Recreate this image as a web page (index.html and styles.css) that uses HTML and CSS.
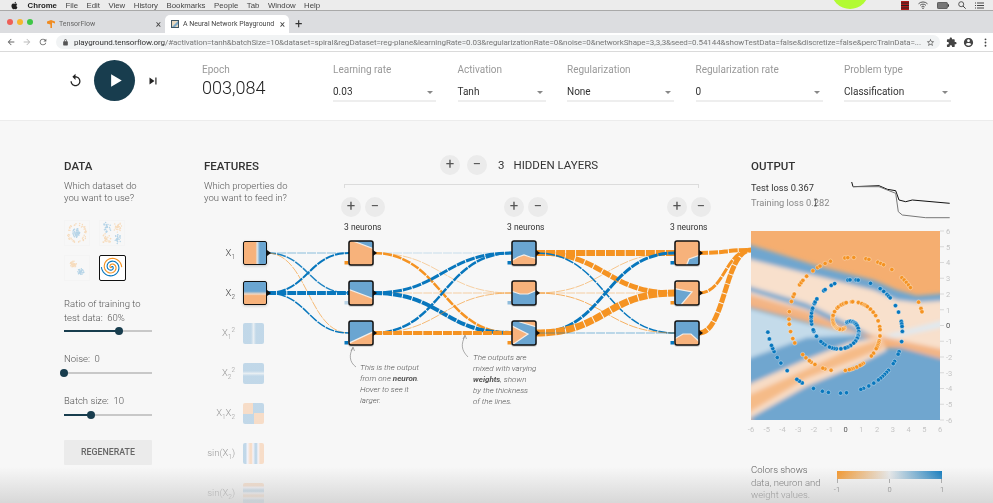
FILE: index.html
```html
<!DOCTYPE html>
<html>
  <head>
    <title>A Neural Network Playground</title>
    <link rel="stylesheet" href="styles.css">
  </head>
  <body>
    <div class="page">
      <div class="menubar">
        <svg class="apple" viewBox="0 0 24 24"><path d="M18.71 19.5c-.83 1.24-1.71 2.45-3.05 2.47-1.34.03-1.77-.79-3.29-.79-1.53 0-2 .77-3.27.82-1.31.05-2.3-1.32-3.14-2.53C4.25 17 2.94 12.45 4.7 9.39c.87-1.52 2.43-2.48 4.12-2.51 1.28-.02 2.5.87 3.29.87.78 0 2.23-1.07 3.75-.91.64.03 2.43.26 3.58 1.98-.09.06-2.14 1.25-2.12 3.74.03 2.98 2.61 3.97 2.64 3.98-.03.07-.42 1.44-1.38 2.83M13 3.5c.73-.83 1.94-1.46 2.94-1.5.13 1.17-.34 2.35-1.04 3.19-.69.85-1.83 1.51-2.95 1.42-.15-1.15.41-2.35 1.05-3.11z"/></svg>
        <b>Chrome</b>
        <span>File</span><span>Edit</span><span>View</span><span>History</span><span>Bookmarks</span><span>People</span><span>Tab</span><span>Window</span><span>Help</span>
        <div class="status-icons">
          <svg width="8" height="9" viewBox="0 0 8 9"><rect width="8" height="9" fill="#b01818"/><path d="M0 2h8M0 4.5h8M0 7h8" stroke="#222" stroke-width="1"/></svg>
          <svg width="10" height="8" viewBox="0 0 10 8"><path d="M.5 2.8a6.4 6.4 0 0 1 9 0M2 4.4a4.2 4.2 0 0 1 6 0M3.4 5.9a2.2 2.2 0 0 1 3.2 0" fill="none" stroke="#333" stroke-width=".8"/><circle cx="5" cy="7.2" r=".7" fill="#333"/></svg>
          <svg width="12" height="7" viewBox="0 0 12 7"><rect x=".4" y=".4" width="10" height="6.2" rx="1" fill="#777" stroke="#333" stroke-width=".7"/><rect x="11" y="2.3" width="1" height="2.4" fill="#333"/></svg>
          <svg width="8" height="8" viewBox="0 0 8 8"><circle cx="3.2" cy="3.2" r="2.5" fill="none" stroke="#333" stroke-width=".8"/><path d="M5 5l2.7 2.7" stroke="#333" stroke-width=".9"/></svg>
          <svg width="9" height="7" viewBox="0 0 9 7"><path d="M2 1h7M2 3.5h7M2 6h7M0 1h1M0 3.500h1M0 6h1" stroke="#333" stroke-width=".9"/></svg>
        </div>
      </div>
      <div class="green-dot"></div>

      <div class="tabstrip">
        <div class="lights"><i class="red"></i><i class="amber"></i><i class="green"></i></div>
        <div class="tab">
          <svg class="favicon" viewBox="0 0 8 8"><path d="M0 1.500L4 0l4 1.500v2L5 2.400V8H3.400V4.600L0 3.500z" fill="#f08c22"/></svg>
          <span class="tab-title">TensorFlow</span>
          <span class="tab-x">×</span>
        </div>
        <div class="tab active">
          <svg class="favicon" viewBox="0 0 8 8"><rect width="8" height="8" fill="#3d5563"/><rect x="1" y="1" width="6" height="6" fill="#e9d9c0"/><path d="M1 7l6-6v3L4 7z" fill="#7aa7c7"/></svg>
          <span class="tab-title">A Neural Network Playground</span>
          <span class="tab-x">×</span>
        </div>
        <span class="new-tab">+</span>
      </div>

      <div class="toolbar">
        <svg class="tool" viewBox="0 0 24 24"><path d="M20 11H7.830l5.590-5.590L12 4l-8 8 8 8 1.410-1.410L7.830 13H20v-2z"/></svg>
        <svg class="tool off" viewBox="0 0 24 24"><path d="M12 4l-1.410 1.410L16.170 11H4v2h12.170l-5.580 5.590L12 20l8-8z"/></svg>
        <svg class="tool" viewBox="0 0 24 24"><path d="M17.65 6.35C16.2 4.9 14.21 4 12 4c-4.42 0-7.99 3.58-7.99 8s3.57 8 7.99 8c3.73 0 6.84-2.55 7.73-6h-2.08c-.82 2.33-3.04 4-5.65 4-3.31 0-6-2.69-6-6s2.69-6 6-6c1.66 0 3.14.69 4.22 1.78L13 11h7V4l-2.35 2.35z"/></svg>
        <div class="omnibox">
          <svg class="lock" viewBox="0 0 24 24"><path d="M18 8h-1V6c0-2.76-2.24-5-5-5S7 3.24 7 6v2H6c-1.1 0-2 .9-2 2v10c0 1.1.9 2 2 2h12c1.1 0 2-.9 2-2V10c0-1.1-.9-2-2-2zM9 6c0-1.66 1.34-3 3-3s3 1.34 3 3v2H9V6z"/></svg>
          <span class="url"><b>playground.tensorflow.org</b>/#activation=tanh&amp;batchSize=10&amp;dataset=spiral&amp;regDataset=reg-plane&amp;learningRate=0.03&amp;regularizationRate=0&amp;noise=0&amp;networkShape=3,3,3&amp;seed=0.54144&amp;showTestData=false&amp;discretize=false&amp;percTrainData=...</span>
          <svg class="star" viewBox="0 0 24 24"><path d="M22 9.24l-7.19-.62L12 2 9.19 8.63 2 9.24l5.46 4.73L5.82 21 12 17.27 18.18 21l-1.63-7.03L22 9.24zM12 15.4l-3.76 2.27 1-4.28-3.32-2.88 4.38-.38L12 6.1l1.71 4.04 4.38.38-3.32 2.88 1 4.28L12 15.4z"/></svg>
        </div>
        <svg class="tool dark" viewBox="0 0 24 24"><path d="M20.5 11H19V7c0-1.1-.9-2-2-2h-4V3.5C13 2.12 11.88 1 10.5 1S8 2.12 8 3.5V5H4c-1.1 0-1.99.9-1.99 2v3.8H3.5c1.49 0 2.7 1.21 2.7 2.7s-1.21 2.7-2.7 2.7H2V20c0 1.1.9 2 2 2h3.8v-1.5c0-1.49 1.21-2.7 2.7-2.7 1.49 0 2.7 1.21 2.7 2.7V22H17c1.1 0 2-.9 2-2v-4h1.5c1.38 0 2.5-1.12 2.5-2.5S21.88 11 20.5 11z"/></svg>
        <svg class="tool dark" viewBox="0 0 24 24"><path d="M12 2C6.48 2 2 6.48 2 12s4.48 10 10 10 10-4.48 10-10S17.52 2 12 2zm0 3c1.66 0 3 1.34 3 3s-1.34 3-3 3-3-1.34-3-3 1.34-3 3-3zm0 14.2c-2.5 0-4.71-1.28-6-3.22.03-1.99 4-3.08 6-3.08 1.99 0 5.97 1.09 6 3.08-1.29 1.94-3.5 3.22-6 3.22z"/></svg>
        <svg class="tool dark" viewBox="0 0 24 24"><circle cx="12" cy="5" r="2"/><circle cx="12" cy="12" r="2"/><circle cx="12" cy="19" r="2"/></svg>
      </div>

      <div class="controls">
        <div class="player">
          <svg class="reset" viewBox="0 0 24 24"><path d="M12 5V1L7 6l5 5V7c3.31 0 6 2.69 6 6s-2.69 6-6 6-6-2.69-6-6H4c0 4.42 3.58 8 8 8s8-3.58 8-8-3.58-8-8-8z"/></svg>
          <div class="play"><svg viewBox="0 0 24 24"><path d="M5 2l17 10L5 22z"/></svg></div>
          <svg class="step" viewBox="0 0 24 24"><path d="M6 18l8.5-6L6 6v12zM16 6v12h2V6h-2z"/></svg>
        </div>
        <div class="epoch">
          <div class="ctl-label">Epoch</div>
          <div class="epoch-value">003,084</div>
        </div>
        <div class="selects">
          <div class="select w-103"><div class="ctl-label">Learning rate</div><div class="select-value">0.03</div></div>
          <div class="select w-88"><div class="ctl-label">Activation</div><div class="select-value">Tanh</div></div>
          <div class="select w-107"><div class="ctl-label">Regularization</div><div class="select-value">None</div></div>
          <div class="select w-127"><div class="ctl-label">Regularization rate</div><div class="select-value">0</div></div>
          <div class="select w-107"><div class="ctl-label">Problem type</div><div class="select-value">Classification</div></div>
        </div>
      </div>

      <div class="main">
        <svg id="network" class="network-lines" viewBox="0 121 993 382"></svg>

        <div class="col">
          <h2>DATA</h2>
          <p class="sub">Which dataset do<br>you want to use?</p>
          <div class="thumbs">
            <svg id="thumb-circle" class="thumb" viewBox="0 0 26 26"></svg>
            <svg id="thumb-xor" class="thumb" viewBox="0 0 26 26"></svg>
            <svg id="thumb-gauss" class="thumb" viewBox="0 0 26 26"></svg>
            <svg id="thumb-spiral" class="thumb selected" viewBox="0 0 26 26"></svg>
          </div>
          <p class="slider-label first">Ratio of training to<br>test data:&nbsp; 60%</p>
          <div class="slider tight"><div class="slider-fill" style="width: 62%"></div></div>
          <p class="slider-label">Noise:&nbsp; 0</p>
          <div class="slider"><div class="slider-fill" style="width: 0%"></div></div>
          <p class="slider-label">Batch size:&nbsp; 10</p>
          <div class="slider"><div class="slider-fill" style="width: 31%"></div></div>
          <div class="regen">REGENERATE</div>
        </div>

        <div class="col">
          <h2>FEATURES</h2>
          <p class="sub">Which properties do<br>you want to feed in?</p>
          <div class="features">
            <div class="feature on"><span class="feature-name">X<sub>1</sub></span><div class="box f-x1"></div></div>
            <div class="feature on"><span class="feature-name">X<sub>2</sub></span><div class="box f-x2"></div></div>
            <div class="feature"><span class="feature-name">X<sub>1</sub><sup>2</sup></span><div class="box f-x1sq"></div></div>
            <div class="feature"><span class="feature-name">X<sub>2</sub><sup>2</sup></span><div class="box f-x2sq"></div></div>
            <div class="feature"><span class="feature-name">X<sub>1</sub>X<sub>2</sub></span><div class="box f-x1x2"></div></div>
            <div class="feature"><span class="feature-name">sin(X<sub>1</sub>)</span><div class="box f-sinx1"></div></div>
            <div class="feature"><span class="feature-name">sin(X<sub>2</sub>)</span><div class="box f-sinx2"></div></div>
          </div>
        </div>

        <div class="col hidden-col">
          <div class="layers-head">
            <span class="round">+</span><span class="round">−</span>
            <span class="layers-count">3</span><span class="layers-title">HIDDEN LAYERS</span>
          </div>
          <div class="bracket"></div>
          <div class="layer-groups">
            <div class="layer-group"><span class="round">+</span><span class="round">−</span><div class="neurons">3 neurons</div></div>
            <div class="layer-group"><span class="round">+</span><span class="round">−</span><div class="neurons">3 neurons</div></div>
            <div class="layer-group"><span class="round">+</span><span class="round">−</span><div class="neurons">3 neurons</div></div>
          </div>
          <div class="note note-neuron">This is the output<br>from one <b>neuron</b>.<br>Hover to see it<br>larger.</div>
          <div class="note note-weights">The outputs are<br>mixed with varying<br><b>weights</b>, shown<br>by the thickness<br>of the lines.</div>
        </div>

        <div class="col">
          <h2>OUTPUT</h2>
          <div class="loss-row">
            <div class="loss">
              <div class="loss-test">Test loss 0.367</div>
              <div class="loss-train">Training loss 0.282</div>
            </div>
            <svg class="loss-chart" viewBox="852 180 100 38">
              <polyline points="852.7,182 854,186.7 880,185.7 888.3,189.3 896.7,190.7 900,200 906.7,201.7 913.3,200 950.7,203.3" fill="none" stroke="#111" stroke-width="1"/>
              <polyline points="854,186.7 880,186.7 890,190.7 896.7,193.3 899.3,211.7 903.3,215 926.7,217.7 950.7,217.7" fill="none" stroke="#777" stroke-width="1"/>
            </svg>
          </div>
          <svg id="plot" class="plot" width="210" height="205" viewBox="0 0 210 205"></svg>
          <div class="legend">
            <p class="legend-text">Colors shows<br>data, neuron and<br>weight values.</p>
            <svg class="legend-scale" width="110" height="30" viewBox="0 0 110 30">
              <defs>
                <linearGradient id="scale-grad">
                  <stop offset="0" stop-color="#f59322"/>
                  <stop offset=".5" stop-color="#e8eaeb"/>
                  <stop offset="1" stop-color="#0877bd"/>
                </linearGradient>
              </defs>
              <rect x="0" y="0" width="105" height="8" fill="url(#scale-grad)"/>
              <path d="M.5 8v4M52.5 8v4M104.5 8v4" stroke="#777" stroke-width=".7"/>
              <text x="0" y="21" text-anchor="middle">-1</text>
              <text x="52.5" y="21" text-anchor="middle">0</text>
              <text x="105" y="21" text-anchor="middle">1</text>
            </svg>
          </div>
        </div>

        <div class="bottom-fade"></div>
      </div>
    </div>
    <script src="app.js"></script>
  </body>
</html>
```

FILE: styles.css
```css
* {
  box-sizing: border-box;
}

body {
  margin: 0;
  background-color: #f7f7f7;
  overflow: hidden;
}

.page {
  position: relative;
  width: 993px;
  height: 503px;
  overflow: hidden;
  font-family: Roboto, "Liberation Sans", sans-serif;
  color: #333;
  filter: blur(0.45px);
}

/* mac menu bar */
.menubar {
  display: flex;
  align-items: center;
  gap: 8.5px;
  height: 11px;
  padding-left: 10px;
  background-color: #ececec;
  border-bottom: 1px solid #a9a9a9;
  font-family: "Liberation Sans", sans-serif;
  font-size: 7.8px;
  color: #444;
}

.menubar b {
  color: #222;
}

.apple {
  width: 9px;
  height: 9px;
  fill: #222;
}

.status-icons {
  display: flex;
  align-items: center;
  gap: 9px;
  margin-left: auto;
  padding-right: 9px;
}

.green-dot {
  position: absolute;
  left: 831px;
  top: -29px;
  width: 38px;
  height: 38px;
  border-radius: 50%;
  background-color: #b2fb33;
}

/* tabs */
.tabstrip {
  display: flex;
  align-items: flex-end;
  height: 22px;
  padding-left: 7px;
  background-color: #dcdde0;
}

.lights {
  display: flex;
  gap: 4px;
  align-self: center;
  width: 34px;
}

.lights i {
  width: 6px;
  height: 6px;
  border-radius: 50%;
}

.lights .red { background-color: #ee5f57; }
.lights .amber { background-color: #f6b62d; }
.lights .green { background-color: #3ec646; }

.tab {
  display: flex;
  align-items: center;
  width: 124px;
  height: 18px;
  padding: 0 4px 0 6px;
  font-size: 7px;
  color: #666;
  white-space: nowrap;
}

.tab.active {
  background-color: #fff;
  border-radius: 5px 5px 0 0;
  color: #444;
}

.favicon {
  width: 8px;
  height: 8px;
  margin-right: 4px;
  flex: none;
}

.tab-x {
  margin-left: auto;
  font-size: 10px;
  color: #444;
}

.new-tab {
  margin-left: 6px;
  height: 18px;
  line-height: 18px;
  font-size: 13px;
  color: #333;
}

/* address bar */
.toolbar {
  display: flex;
  align-items: center;
  gap: 6px;
  height: 19px;
  padding: 0 2px 0 6px;
  background-color: #fff;
  border-bottom: 1px solid #dadada;
}

.tool {
  width: 10px;
  height: 10px;
  fill: #666;
  flex: none;
}

.tool.off {
  fill: #bbb;
}

.tool.dark {
  fill: #444;
  width: 11px;
  height: 11px;
}

.omnibox {
  display: flex;
  align-items: center;
  flex: none;
  width: 884px;
  height: 14px;
  margin-left: 2px;
  padding: 0 5px 0 6px;
  border-radius: 7px;
  background-color: #f1f3f4;
}

.lock {
  width: 7px;
  height: 7px;
  margin-right: 5px;
  fill: #555;
  flex: none;
}

.url {
  font-size: 8px;
  letter-spacing: -0.08px;
  color: #777;
  white-space: nowrap;
}

.url b {
  font-weight: 400;
  color: #333;
}

.star {
  width: 9px;
  height: 9px;
  margin-left: auto;
  fill: #555;
  flex: none;
}

/* run controls */
.controls {
  display: flex;
  align-items: flex-start;
  height: 69px;
  background-color: #fff;
  border-bottom: 1px solid #ececec;
}

.player {
  display: flex;
  align-items: center;
  width: 202px;
  height: 41px;
  margin-top: 8px;
  padding-left: 68px;
}

.reset {
  width: 15px;
  height: 15px;
  fill: #222;
}

.play {
  display: flex;
  align-items: center;
  justify-content: center;
  width: 41px;
  height: 41px;
  margin-left: 11px;
  border-radius: 50%;
  background-color: #183d4e;
}

.play svg {
  width: 15px;
  height: 15px;
  fill: #fff;
  margin-left: 1px;
}

.step {
  width: 14px;
  height: 14px;
  margin-left: 11px;
  fill: #222;
}

.epoch {
  width: 131px;
  padding-top: 12px;
}

.ctl-label {
  font-size: 10px;
  line-height: 12px;
  color: #999;
}

.epoch-value {
  margin-top: 1px;
  font-size: 18px;
  line-height: 22px;
  font-weight: 300;
  color: #222;
}

.selects {
  display: flex;
  gap: 21.5px;
  padding-top: 12px;
}

.select {
  position: relative;
}

.w-103 { width: 103px; }
.w-88 { width: 88px; }
.w-107 { width: 107px; }
.w-127 { width: 127px; }

.select-value {
  position: relative;
  height: 20px;
  margin-top: 6px;
  font-size: 10px;
  line-height: 20px;
  color: #333;
  border-bottom: 2px solid #eee;
}

.select-value::after {
  content: "";
  position: absolute;
  right: 3px;
  top: 9px;
  border-left: 3px solid transparent;
  border-right: 3px solid transparent;
  border-top: 3px solid #888;
}

/* main area */
.main {
  position: relative;
  display: grid;
  grid-template-columns: 140px 140px 407px 200px;
  height: 382px;
  padding-left: 64px;
  background-color: #f7f7f7;
}

.network-lines {
  position: absolute;
  left: 0;
  top: 0;
  width: 993px;
  height: 382px;
}

.col {
  position: relative;
}

h2 {
  margin: 38px 0 0;
  font-size: 11.5px;
  line-height: 14px;
  font-weight: 500;
  color: #333;
}

.sub {
  margin: 7px 0 0;
  font-size: 9.5px;
  line-height: 12px;
  font-weight: 300;
  color: #555;
}

.thumbs {
  display: grid;
  grid-template-columns: 26px 26px;
  grid-auto-rows: 26px;
  gap: 9px;
  margin-top: 16px;
}

.thumb {
  width: 26px;
  height: 26px;
  border: 1px solid #ededed;
  opacity: 0.27;
}

.thumb.selected {
  opacity: 1;
  width: 27px;
  background-color: #fff;
  border: 1.5px solid #111;
  border-radius: 2px;
}

.slider-label {
  margin: 20px 0 0;
  font-size: 9.5px;
  line-height: 14px;
  font-weight: 300;
  color: #555;
}

.slider-label.first {
  margin-top: 16px;
}

.slider {
  width: 88px;
  height: 2px;
  margin-top: 6px;
  background-color: #c8c8c8;
}

.slider.tight {
  margin-top: 5px;
  margin-bottom: 1px;
}

.slider-fill {
  position: relative;
  height: 2px;
  background-color: #183d4e;
}

.slider-fill::after {
  content: "";
  position: absolute;
  right: -4px;
  top: -3px;
  width: 8px;
  height: 8px;
  border-radius: 50%;
  background-color: #183d4e;
}

.regen {
  width: 88px;
  height: 25px;
  margin-top: 24px;
  background-color: #ebebeb;
  border-radius: 1px;
  font-size: 8.8px;
  font-weight: 500;
  line-height: 25px;
  text-align: center;
  color: #666;
}

/* features */
.features {
  display: flex;
  flex-direction: column;
  gap: 16px;
  margin-top: 37px;
}

.feature {
  display: flex;
  align-items: center;
  height: 24px;
}

.feature-name {
  width: 31px;
  margin-right: 8px;
  font-size: 9.5px;
  line-height: 12px;
  font-weight: 300;
  color: #999;
  text-align: right;
  white-space: nowrap;
}

.feature.on .feature-name {
  color: #444;
}

sub, sup {
  font-size: 6.5px;
  line-height: 0;
}

.box {
  width: 21px;
  height: 21px;
  border-radius: 2px;
  opacity: 0.38;
}

.feature.on .box {
  width: 24px;
  height: 24px;
  border: 1.5px solid #111;
  opacity: 1;
  box-shadow: 0 1px 3px rgba(0, 0, 0, 0.2);
}

.f-x1 { background: linear-gradient(90deg, #f7b27b 52%, #dfe6ea 60%, #6aa5d1 72%); }
.f-x2 { background: linear-gradient(180deg, #6aa5d1 42%, #f0d8c4 55%, #f7b27b 62%); }
.f-x1sq { background: linear-gradient(90deg, #6aa5d1 38%, #cfe0ec 50%, #6aa5d1 62%); }
.f-x2sq { background: linear-gradient(180deg, #6aa5d1 38%, #cfe0ec 50%, #6aa5d1 62%); }
.f-x1x2 { background: conic-gradient(#6aa5d1 90deg, #f7b27b 90deg 180deg, #6aa5d1 180deg 270deg, #f7b27b 270deg); }
.f-sinx1 { background: linear-gradient(90deg, #6aa5d1 12%, #eef 22%, #f7b27b 34% 40%, #eef 48%, #6aa5d1 58% 64%, #eef 72%, #f7b27b 82%); }
.f-sinx2 { background: linear-gradient(180deg, #f7b27b 12%, #eef 22%, #6aa5d1 34% 40%, #eef 48%, #f7b27b 58% 64%, #eef 72%, #6aa5d1 82%); }

/* hidden layers */
.layers-head {
  display: flex;
  align-items: center;
  gap: 7px;
  margin-top: 34px;
  padding-left: 96px;
}

.round {
  display: inline-block;
  width: 20px;
  height: 20px;
  border-radius: 50%;
  background-color: #ebebeb;
  font-size: 15px;
  line-height: 19px;
  text-align: center;
  color: #555;
}

.layers-count {
  margin-left: 4px;
  font-size: 11.5px;
  color: #333;
}

.layers-title {
  margin-left: 2px;
  font-size: 11.5px;
  color: #333;
}

.bracket {
  width: 355px;
  height: 4px;
  margin-top: 9px;
  border: 1px solid #dcdcdc;
  border-bottom: none;
}

.layer-groups {
  display: flex;
  gap: 119px;
  margin: 9px 0 0 -3px;
}

.layer-group {
  display: flex;
  flex-wrap: wrap;
  gap: 0 4px;
  width: 44px;
}

.neurons {
  margin-top: 5px;
  padding-left: 3px;
  font-size: 8.5px;
  line-height: 10px;
  color: #333;
  white-space: nowrap;
}

.note {
  position: absolute;
  font-size: 8px;
  line-height: 11px;
  font-style: italic;
  font-weight: 300;
  color: #555;
  white-space: nowrap;
}

.note b {
  font-weight: 700;
}

.note-neuron {
  left: 16px;
  top: 241px;
}

.note-weights {
  left: 129px;
  top: 231px;
}

/* output */
.loss-row {
  display: flex;
  justify-content: space-between;
  margin-top: 7px;
  height: 38px;
}

.loss {
  font-size: 9.3px;
  line-height: 15px;
}

.loss-test {
  color: #333;
}

.loss-train {
  color: #888;
}

.loss-chart {
  width: 100px;
  height: 38px;
  overflow: visible;
}

.plot {
  display: block;
  margin-top: 13px;
  overflow: visible;
}

.plot text {
  font-size: 7.5px;
  font-family: Roboto, sans-serif;
  fill: #c4c4c4;
}

.plot text.zero {
  fill: #555;
}

.legend {
  display: flex;
  margin-top: 28px;
}

.legend-text {
  width: 86px;
  margin: 0;
  font-size: 9.5px;
  line-height: 12.5px;
  font-weight: 300;
  color: #555;
  white-space: nowrap;
}

.legend-scale {
  margin-top: 7px;
  overflow: visible;
}

.legend-scale text {
  font-size: 7.5px;
  fill: #777;
}

.bottom-fade {
  position: absolute;
  left: 0;
  right: 0;
  bottom: 0;
  height: 36px;
  background: linear-gradient(180deg, rgba(210, 210, 210, 0), rgba(205, 205, 205, 0.75));
  pointer-events: none;
}
```

FILE: app.js
```js
var NS = "http://www.w3.org/2000/svg";
var ORANGE = "#f59322";
var BLUE = "#0877bd";
var NODE_ORANGE = "#f7b27b";
var NODE_BLUE = "#6aa5d1";

function el(parent, name, attrs) {
  var node = document.createElementNS(NS, name);
  for (var key in attrs) node.setAttribute(key, attrs[key]);
  parent.appendChild(node);
  return node;
}

// small fixed random so the picture is the same on every load
var seed = 54144;
function rand() {
  seed = (seed * 16807) % 2147483647;
  return seed / 2147483647;
}

var net = document.getElementById("network");
var defs = el(net, "defs", {});
var soft = el(defs, "filter", { id: "soft", x: "-20%", y: "-20%", width: "140%", height: "140%" });
el(soft, "feGaussianBlur", { stdDeviation: "0.7" });

var colX = [243, 349, 512, 675];
var rowY = [253, 293, 333];

function link(x1, y1, x2, y2, width, color, opacity) {
  var mid = (x1 + x2) / 2;
  el(net, "path", {
    d: "M" + x1 + " " + y1 + "C" + mid + " " + y1 + " " + mid + " " + y2 + " " + x2 + " " + y2,
    fill: "none",
    stroke: color,
    "stroke-width": width,
    "stroke-opacity": opacity,
    "stroke-dasharray": "9,1"
  });
}

// [layer, from, to, width, color, opacity]
var links = [
  [0, 0, 0, 1.5, BLUE, 0.3], [0, 0, 1, 1.5, BLUE, 0.9], [0, 0, 2, 1, ORANGE, 0.6],
  [0, 1, 0, 2, BLUE, 1], [0, 1, 1, 4, BLUE, 1], [0, 1, 2, 1.5, BLUE, 1],
  [1, 0, 0, 1, BLUE, 0.2], [1, 0, 1, 1, ORANGE, 0.4], [1, 0, 2, 2.5, ORANGE, 1],
  [1, 1, 0, 3, BLUE, 1], [1, 1, 1, 1, ORANGE, 0.4], [1, 1, 2, 4, BLUE, 1],
  [1, 2, 0, 2.5, BLUE, 1], [1, 2, 1, 1, ORANGE, 0.6], [1, 2, 2, 4, ORANGE, 1],
  [2, 0, 0, 6, ORANGE, 1], [2, 0, 1, 5, ORANGE, 1], [2, 0, 2, 1.5, BLUE, 1],
  [2, 1, 0, 1, ORANGE, 0.5], [2, 1, 1, 1, ORANGE, 0.4], [2, 1, 2, 1, ORANGE, 0.7],
  [2, 2, 0, 3, BLUE, 1], [2, 2, 1, 7, ORANGE, 1], [2, 2, 2, 1, BLUE, 0.5]
];

links.forEach(function (l) {
  link(colX[l[0]] + 24, rowY[l[1]], colX[l[0] + 1], rowY[l[2]], l[3], l[4], l[5]);
});
link(699, 253, 751, 250, 4, ORANGE, 1);
link(699, 293, 751, 250, 3, ORANGE, 1);
link(699, 333, 751, 250, 5, ORANGE, 1);

// [column, row, background, other colour, polygons, small square colour]
var nodes = [
  [1, 0, NODE_ORANGE, NODE_BLUE, ["-4,-4 28,-4 28,9 -4,-3"], ORANGE],
  [1, 1, NODE_BLUE, NODE_ORANGE, ["-4,7 28,19 28,28 -4,28"], "#b9d3e6"],
  [1, 2, NODE_BLUE, NODE_ORANGE, ["-4,24 28,9 28,28 -4,28"], BLUE],
  [2, 0, NODE_BLUE, NODE_ORANGE, ["-4,22 6,16 12,14 18,16 28,18 28,28 -4,28"], BLUE],
  [2, 1, NODE_ORANGE, NODE_BLUE, ["-4,9 8,13 16,13 28,8 28,28 -4,28"], "#8fbcdc"],
  [2, 2, NODE_BLUE, NODE_ORANGE, ["4,-4 28,-4 28,7 8,1", "-4,3 16,13 0,24 -4,24"], ORANGE],
  [3, 0, NODE_ORANGE, NODE_BLUE, ["10,28 14,18 28,13 28,28"], BLUE],
  [3, 1, NODE_ORANGE, NODE_BLUE, ["-4,7 17,11 6,24 -4,24", "-1,-4 10,-4 -1,2"], ORANGE],
  [3, 2, NODE_BLUE, NODE_ORANGE, ["-4,28 -4,20 8,13 16,13 28,24 28,28"], BLUE]
];

nodes.forEach(function (n) {
  var x = colX[n[0]];
  var y = rowY[n[1]] - 12;
  el(net, "rect", { x: x - 1, y: y, width: 26, height: 26, rx: 3, fill: "#000", opacity: 0.12 });
  var box = el(net, "svg", { x: x, y: y, width: 24, height: 24, viewBox: "0 0 24 24" });
  el(box, "rect", { width: 24, height: 24, fill: n[2] });
  n[4].forEach(function (points) {
    el(box, "polygon", { points: points, fill: n[3], stroke: "#f3eee8", "stroke-width": 1.2, filter: "url(#soft)" });
  });
  el(net, "rect", { x: x, y: y, width: 24, height: 24, rx: 2, fill: "none", stroke: "#111", "stroke-width": 1.5 });
  el(net, "path", { d: "M" + (x + 24) + " " + (y + 9) + "l4 3l-4 3z", fill: "#111" });
  el(net, "rect", { x: x - 4.5, y: y + 20, width: 3.5, height: 3.5, fill: n[5] });
});

// output nubs of the two live inputs
el(net, "path", { d: "M267 250l4 3l-4 3z", fill: "#111" });
el(net, "path", { d: "M267 290l4 3l-4 3z", fill: "#111" });

// annotation arrows
el(net, "path", { d: "M353 348C349 354 349 362 356 367", fill: "none", stroke: "#777", "stroke-width": 0.6 });
el(net, "path", { d: "M351 351l2-4l1.500 4", fill: "none", stroke: "#777", "stroke-width": 0.6 });
el(net, "path", { d: "M465 336C461 344 461 350 468 357", fill: "none", stroke: "#777", "stroke-width": 0.6 });
el(net, "path", { d: "M463 339l2-4l1.500 4", fill: "none", stroke: "#777", "stroke-width": 0.6 });

// output heatmap, drawn in a 567 unit square (3 units to a pixel)
var plot = document.getElementById("plot");
var heat = el(plot, "svg", { x: 0, y: 0, width: 189, height: 189, viewBox: "33 18 567 567" });
var hd = el(heat, "defs", {});
var hb = el(hd, "filter", { id: "heat-blur", filterUnits: "userSpaceOnUse", x: -100, y: -100, width: 900, height: 900 });
el(hb, "feGaussianBlur", { stdDeviation: "7" });
var cold = "#f5ae70";
var hot = "#6fa6cf";
el(heat, "rect", { x: 33, y: 18, width: 567, height: 567, fill: cold });
var g = el(heat, "g", { filter: "url(#heat-blur)" });
[
  ["0,92 300,170 500,220 640,215 640,412 430,345 0,200", "#f8e0cc"],
  ["0,50 240,125 400,165 470,195 530,212 640,203 640,225 530,232 470,225 400,195 240,155 0,95", hot],
  ["0,176 200,235 400,332 360,332 200,252 0,190", hot],
  ["430,332 640,278 640,300 460,338", "#dfe9f0"],
  ["0,200 200,258 360,325 430,335 640,380 640,412 480,365 410,345 200,280 0,232", "#f3b586"],
  ["0,238 200,290 410,345 432,368 480,368 640,412 640,620 0,620", hot],
  ["0,244 200,296 372,330 200,338 0,410", "#c4dbea"],
  ["0,490 200,402 330,352 418,336 440,376 350,422 200,484 0,596", "#f8dcc5"],
  ["0,522 200,432 330,372 415,345 430,368 350,402 200,460 0,578", "#f5bb88"],
  ["0,600 33,582 60,620 0,640", cold]
].forEach(function (p) {
  el(g, "polygon", { points: p[0], fill: p[1] });
});

// the spiral data set: part of each class is left out for testing
function spiral(delta, color) {
  var n = 250;
  for (var i = 0; i < n; i++) {
    var r = (i / n) * 5;
    var t = 1.75 * (i / n) * 2 * Math.PI + delta;
    if (rand() > 0.42 || i < 8) continue;
    el(heat, "circle", {
      cx: 317 + r * Math.sin(t) * 47.25,
      cy: 301 - r * Math.cos(t) * 47.25,
      r: 6.5,
      fill: color,
      stroke: "#fff",
      "stroke-opacity": 0.7,
      "stroke-width": 1.5
    });
  }
}
spiral(0, BLUE);
spiral(Math.PI, ORANGE);

// axis ticks and labels
for (var v = -6; v <= 6; v++) {
  var pos = (v + 6) * 15.75;
  var ty = 189 - pos;
  el(plot, "path", { d: "M189 " + ty + "h4", stroke: "#ccc", "stroke-width": 0.7 });
  var right = el(plot, "text", { x: 195, y: ty + 2.8, "class": v === 0 ? "zero" : "" });
  right.textContent = v;
  var bottom = el(plot, "text", { x: pos, y: 201, "text-anchor": "middle", "class": v === 0 ? "zero" : "" });
  bottom.textContent = v;
}

// I-beam cursor over the training loss
var chart = document.querySelector(".loss-chart");
el(chart, "path", { d: "M815 199h3M816.500 199v7M815 206h3", stroke: "#333", "stroke-width": 0.6, fill: "none" });

// data set thumbnails
function dots(id, list) {
  var svg = document.getElementById(id);
  list.forEach(function (d) {
    el(svg, "circle", { cx: d[0], cy: d[1], r: 0.8, fill: d[2] });
  });
}

function cluster(cx, cy, spread, color, count, out) {
  for (var i = 0; i < count; i++) {
    var a = rand() * 2 * Math.PI;
    var r = rand() * spread;
    out.push([cx + r * Math.cos(a), cy + r * Math.sin(a), color]);
  }
}

var ring = [];
cluster(13, 13, 5, BLUE, 50, ring);
for (var i = 0; i < 50; i++) {
  var a = rand() * 2 * Math.PI;
  var r = 8 + rand() * 3;
  ring.push([13 + r * Math.cos(a), 13 + r * Math.sin(a), ORANGE]);
}
dots("thumb-circle", ring);

var xor = [];
cluster(7, 7, 5.5, BLUE, 28, xor);
cluster(19, 19, 5.5, BLUE, 28, xor);
cluster(19, 7, 5.5, ORANGE, 28, xor);
cluster(7, 19, 5.5, ORANGE, 28, xor);
dots("thumb-xor", xor);

var gauss = [];
cluster(9, 9, 3.5, ORANGE, 40, gauss);
cluster(17, 17, 3.5, BLUE, 40, gauss);
dots("thumb-gauss", gauss);

function spiralLine(id, delta, color) {
  var points = [];
  for (var i = 0; i <= 60; i++) {
    var r = (i / 60) * 11;
    var t = 1.75 * (i / 60) * 2 * Math.PI + delta;
    points.push((12 + r * Math.sin(t)).toFixed(1) + "," + (12 - r * Math.cos(t)).toFixed(1));
  }
  el(document.getElementById(id), "polyline", {
    points: points.join(" "),
    fill: "none",
    stroke: color,
    "stroke-width": 1.2
  });
}
spiralLine("thumb-spiral", 0, BLUE);
spiralLine("thumb-spiral", Math.PI, ORANGE);
```
